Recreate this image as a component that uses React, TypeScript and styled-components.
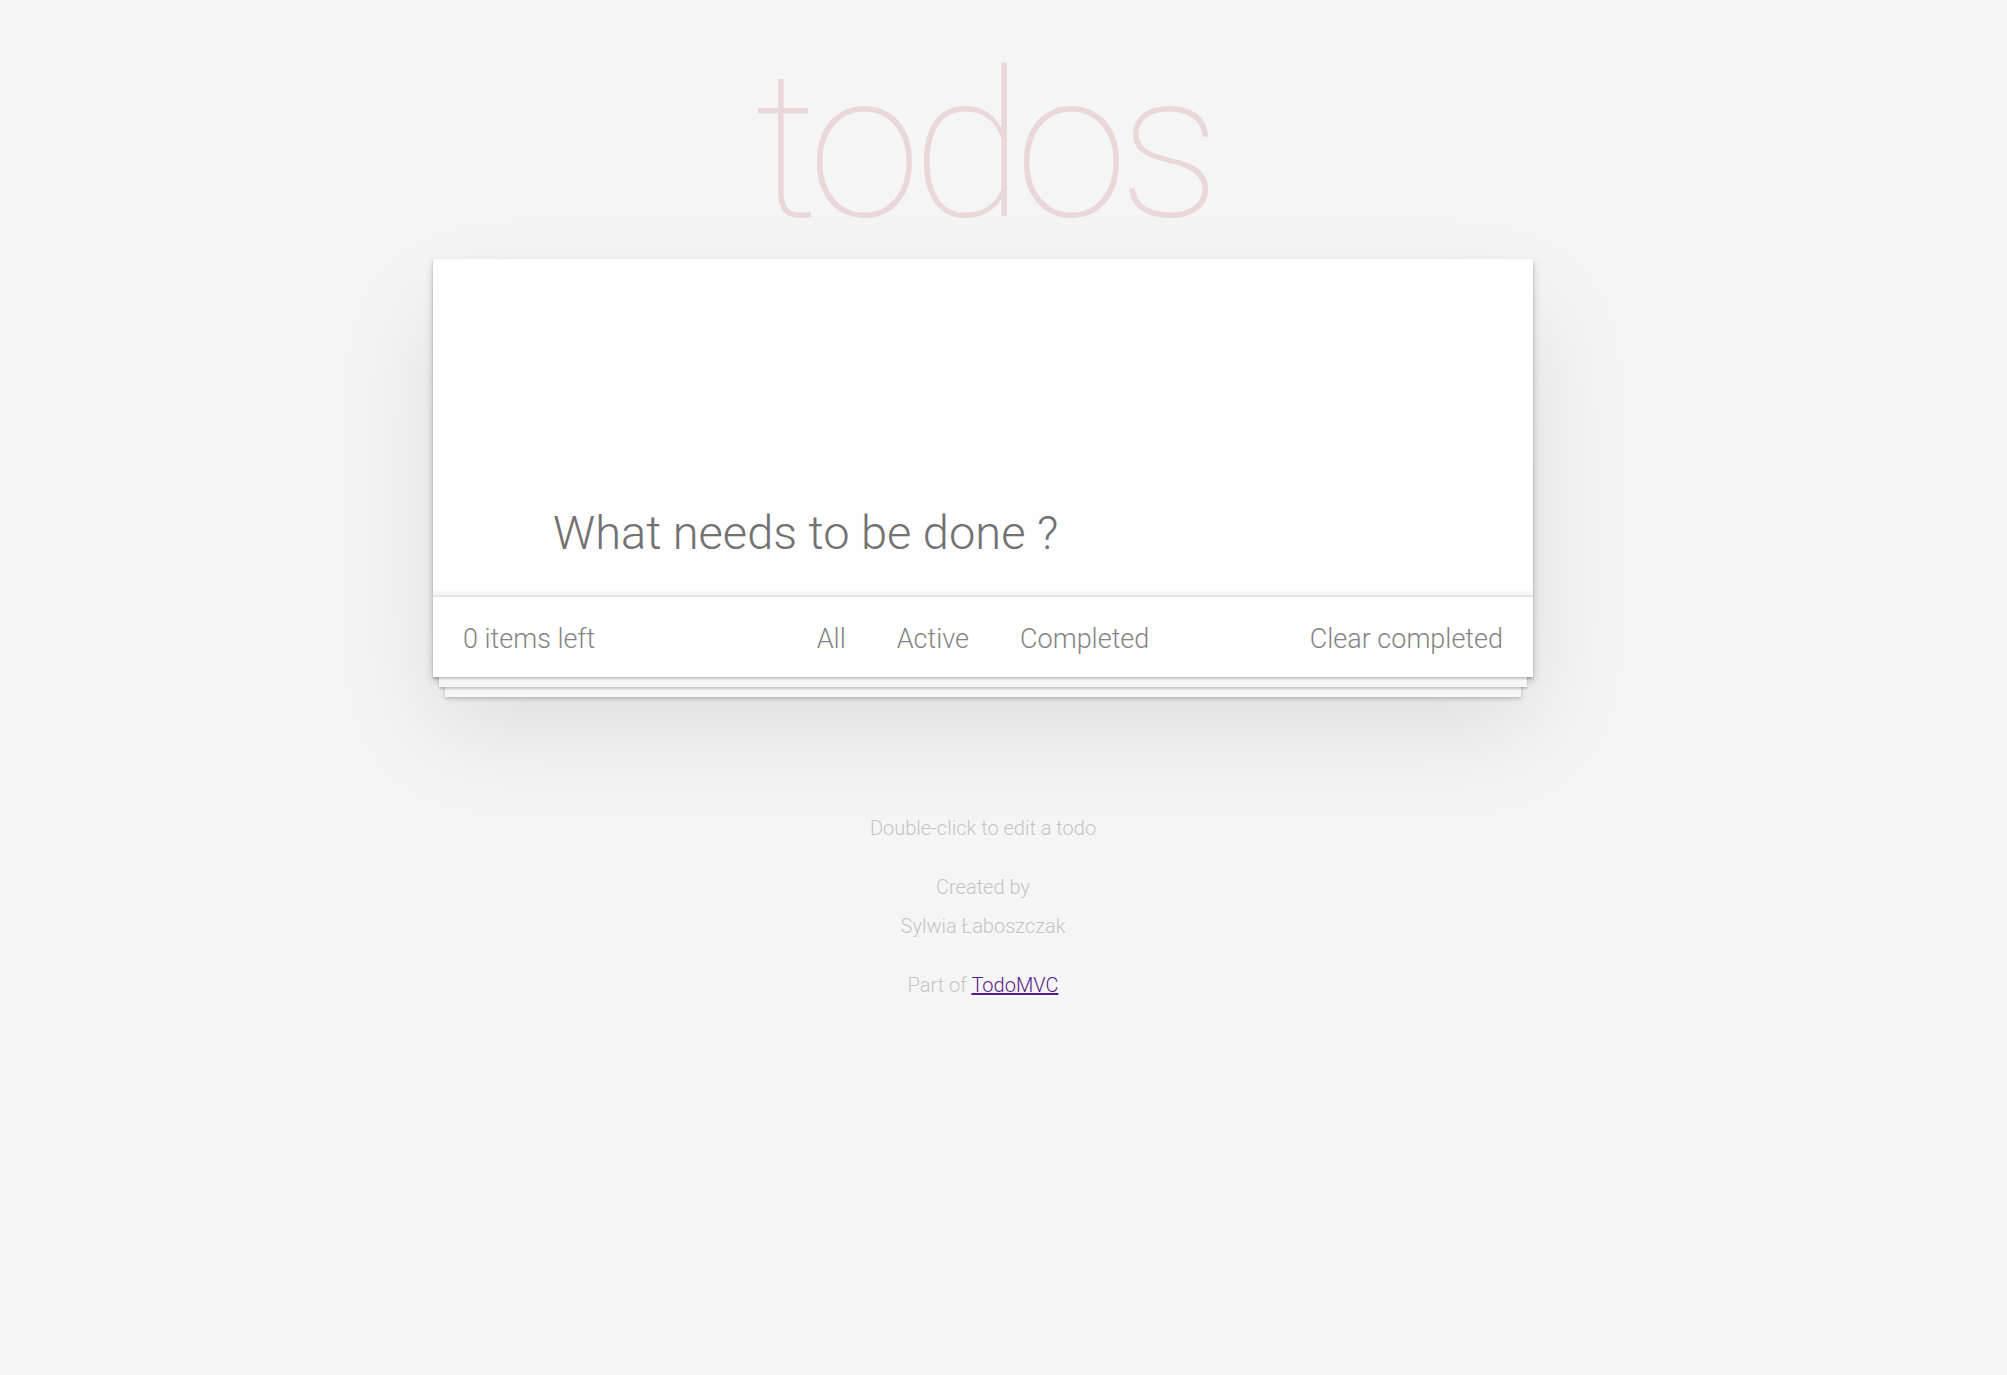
import React from "react";
import styled, { createGlobalStyle } from "styled-components";

const GlobalStyle = createGlobalStyle`
  html, body {
    margin: 0;
    padding: 0;
    background: #f5f5f5;
  }
  body {
    font-family: Roboto, "Liberation Sans", Arial, sans-serif;
    font-weight: 300;
    color: #4d4d4d;
    padding-right: 41px;
    -webkit-font-smoothing: antialiased;
  }
`;

const Page = styled.div`
  width: 1100px;
  margin: 0 auto;
  padding-top: 44px;
  padding-bottom: 80px;
`;

const Title = styled.h1`
  margin: 0 0 10px 0;
  height: 205px;
  font-size: 205px;
  line-height: 205px;
  font-weight: 100;
  letter-spacing: -9px;
  text-align: center;
  color: rgba(175, 47, 47, 0.15);
`;

const Card = styled.section`
  background: #fff;
  box-shadow:
    0 2px 2px rgba(0, 0, 0, 0.2),
    0 16px 0 -6px #f6f6f6,
    0 18px 2px -6px rgba(0, 0, 0, 0.2),
    0 32px 0 -12px #f6f6f6,
    0 34px 4px -12px rgba(0, 0, 0, 0.2),
    0 4px 8px 0 rgba(0, 0, 0, 0.2),
    0 50px 100px 0 rgba(0, 0, 0, 0.1);
`;

const Header = styled.header`
  height: 336px;
  display: flex;
  flex-direction: column;
  justify-content: flex-end;
`;

const NewTodo = styled.input`
  box-sizing: border-box;
  width: 100%;
  margin: 0;
  padding: 32px 32px 29px 120px;
  border: none;
  outline: none;
  background: rgba(0, 0, 0, 0.003);
  box-shadow: inset 0 -4px 2px rgba(0, 0, 0, 0.03);
  font-family: inherit;
  font-size: 47px;
  line-height: 67px;
  font-weight: 300;
  color: #4d4d4d;

  &::placeholder {
    color: #727272;
    opacity: 1;
  }
`;

const Footer = styled.footer`
  display: grid;
  grid-template-columns: 1fr auto 1fr;
  align-items: center;
  height: 40px;
  padding: 20px 30px;
  border-top: 2px solid #e6e6e6;
  color: #848484;
  font-size: 27px;
  line-height: 40px;
`;

const Count = styled.span`
  justify-self: start;
`;

const Filters = styled.ul`
  display: flex;
  gap: 7px;
  margin: 0;
  padding: 0;
  list-style: none;
`;

const FilterLink = styled.a`
  display: block;
  margin: 0 6px;
  padding: 0 14px;
  border: 2px solid transparent;
  border-radius: 6px;
  color: inherit;
  text-decoration: none;
  cursor: pointer;
`;

const ClearButton = styled.button`
  justify-self: end;
  margin: 0;
  padding: 0;
  border: none;
  background: none;
  font-family: inherit;
  font-size: 27px;
  font-weight: 300;
  line-height: 40px;
  color: #848484;
  cursor: pointer;
`;

const Info = styled.footer`
  margin-top: 141px;
  text-align: center;
  color: #c4c4c4;
  font-size: 20px;
  text-shadow: 0 2px 0 rgba(255, 255, 255, 0.5);
`;

const InfoLine = styled.p<{ $gap: number }>`
  margin: ${(p) => p.$gap}px 0 0 0;
  line-height: 20px;
`;

const InfoLink = styled.a`
  color: #551a8b;
  text-decoration: underline;
`;

export default function App() {
  return (
    <>
      <GlobalStyle />
      <Page>
        <Title>todos</Title>
        <Card>
          <Header>
            <NewTodo placeholder="What needs to be done ?" />
          </Header>
          <Footer>
            <Count>0 items left</Count>
            <Filters>
              <li>
                <FilterLink>All</FilterLink>
              </li>
              <li>
                <FilterLink>Active</FilterLink>
              </li>
              <li>
                <FilterLink>Completed</FilterLink>
              </li>
            </Filters>
            <ClearButton>Clear completed</ClearButton>
          </Footer>
        </Card>
        <Info>
          <InfoLine $gap={0}>Double-click to edit a todo</InfoLine>
          <InfoLine $gap={39}>Created by</InfoLine>
          <InfoLine $gap={19}>Sylwia Łaboszczak</InfoLine>
          <InfoLine $gap={39}>
            Part of <InfoLink href="#">TodoMVC</InfoLink>
          </InfoLine>
        </Info>
      </Page>
    </>
  );
}
